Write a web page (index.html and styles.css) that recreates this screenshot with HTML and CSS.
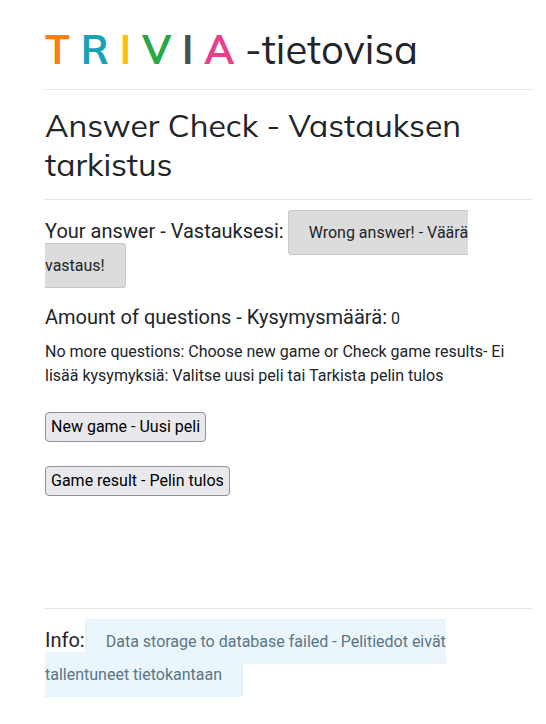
FILE: index.html
```html
<!DOCTYPE html>
<html lang="fi">
<head>
<meta charset="utf-8">
<title>TRIVIA -tietovisa</title>
<link rel="stylesheet" href="styles.css">
</head>
<body>
<main class="container">
<h1><b><span class="orange">T</span> <span class="teal">R</span> <span class="yellow">I</span> <span class="green">V</span> <span class="gray">I</span> <span class="pink">A</span></b> -tietovisa</h1>
<hr>
<h2>Answer Check - Vastauksen tarkistus</h2>
<hr>
<div class="line"><span class="label">Your answer - Vastauksesi:</span> <span class="alert wrong">Wrong answer! - Väärä vastaus!</span></div>
<div class="amount"><span class="label">Amount of questions - Kysymysmäärä:</span> 0</div>
<p>No more questions: Choose new game or Check game results- Ei lisää kysymyksiä: Valitse uusi peli tai Tarkista pelin tulos</p>
<div class="actions"><button>New game - Uusi peli</button><button>Game result - Pelin tulos</button></div>
<hr>
<div class="line info"><span class="label">Info:</span><span class="alert stored">Data storage to database failed - Pelitiedot eivät tallentuneet tietokantaan</span></div>
</main>
</body>
</html>
```
FILE: styles.css
```css
* { box-sizing: border-box; }
body { margin: 0; background: #fff; color: #212529; font: 16px/24px Roboto, sans-serif; }
.container { min-height: 724px; padding: 25px 13px 0 45px; }
h1, h2 { margin: 0; font-family: Muli, Mulish, Nunito, Lato, sans-serif; font-weight: 400; }
h1 { font-size: 40px; line-height: 48px; white-space: nowrap; }
h2 { margin-top: 16px; font-size: 32px; line-height: 39px; }
hr { margin: 16px 0 15px; border: 0; border-top: 1px solid #e5e5e5; }
h2 + hr { margin-top: 15px; }
.orange { color: #fd7e14; }
.teal { color: #17a2b8; }
.yellow { color: #ffc107; }
.green { color: #28a745; }
.gray { color: #4b4d52; }
.pink { color: #e83e8c; }
.label { font-size: 20px; }
.line { line-height: 33px; }
.alert { padding: 12px 20px; border: 1px solid transparent; border-radius: 4px; }
.wrong { background: #dcdcdc; border-color: #c8c8c8; }
.stored { background: #eaf6fc; border-color: #e2f3fb; color: #5b7586; }
.amount { margin-top: 23px; }
p { margin: 9px 0 24px; }
.actions { display: flex; flex-direction: column; align-items: flex-start; gap: 24px; }
button { height: 30px; padding: 1px 5px; border: 1px solid #8f8f9d; border-radius: 4px; background: #e9e9ed; color: #000; font: inherit; }
.actions + hr { margin-top: 112px; }
```
